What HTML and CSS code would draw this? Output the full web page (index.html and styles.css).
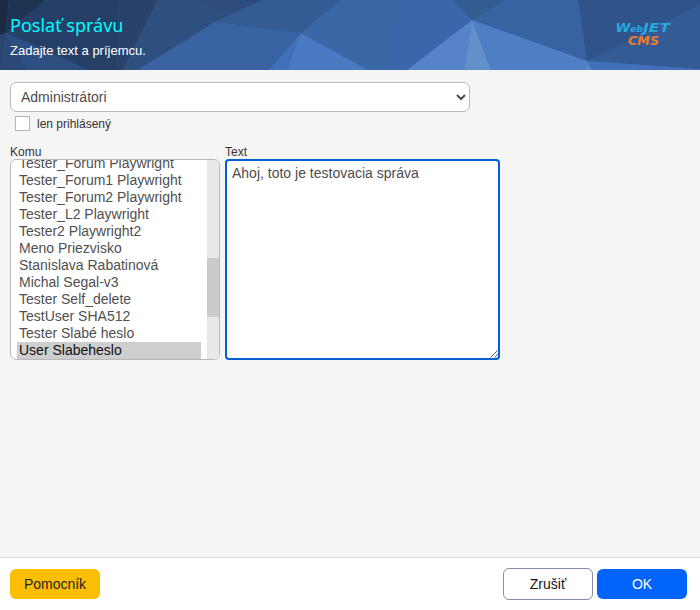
FILE: index.html
```html
<!DOCTYPE html>
<html lang="sk">
<head>
<meta charset="utf-8">
<title>Poslať správu</title>
<link rel="stylesheet" href="styles.css">
</head>
<body>
<header class="header">
  <svg class="header-bg" viewBox="0 0 700 70" preserveAspectRatio="none" aria-hidden="true">
    <rect width="700" height="70" fill="#3862a1"/>
    <path fill="#1a2a43" d="M0 0H9L6 33L0 35Z"/>
    <path fill="#1f3352" d="M9 0H46L6 33Z"/>
    <path fill="#263f66" d="M46 0H119L117 70H88L6 33Z"/>
    <path fill="#28426b" d="M119 0H158L123 70H117Z"/>
    <path fill="#294673" d="M0 35L6 33L1 70H0Z"/>
    <path fill="#2a4978" d="M6 33L27 70H1Z"/>
    <path fill="#2d4e80" d="M6 33L88 70H27Z"/>
    <path fill="#2e5081" d="M158 0H262L215 22L138 70H123Z"/>
    <path fill="#2e4d7d" d="M195 0H262L230 15Z"/>
    <path fill="#345b92" d="M262 0H341L301 33L215 22L230 15Z"/>
    <path fill="#3862a1" d="M215 22L301 33L269 70H138Z"/>
    <path fill="#4070bb" d="M301 33L287 70H269Z"/>
    <path fill="#4a7bc2" d="M301 33L368 70H287Z"/>
    <path fill="#3a67a5" d="M341 0H400L393 70H368L301 33Z"/>
    <path fill="#3b66a9" d="M399 0H453L472 20L407 70H392Z"/>
    <path fill="#335c91" d="M452 0H505L472 20Z"/>
    <path fill="#5784c8" d="M472 20L464 70H407Z"/>
    <path fill="#6490ca" d="M472 20L491 70H464Z"/>
    <path fill="#4e7fc4" d="M472 20L587 61L584 70H491Z"/>
    <path fill="#30548a" d="M578 0H700V5L587 61Z"/>
    <path fill="#345b93" d="M700 5V69L587 61Z"/>
    <path fill="#4070bb" d="M587 61L700 69V70H592Z"/>
    <path fill="#5784c8" d="M587 61L592 70H584Z"/>
  </svg>
  <div class="heading">
    <h1>Poslať správu</h1>
    <p>Zadajte text a príjemcu.</p>
  </div>
  <svg class="logo" width="60" height="26" viewBox="0 0 60 26">
    <g font-family="DejaVu Sans, sans-serif" font-weight="bold" font-style="italic">
      <text x="2.5" y="10.8" font-size="12" fill="#28a9e0" textLength="15" lengthAdjust="spacingAndGlyphs">W</text>
      <text x="17" y="10.8" font-size="9" fill="#28a9e0" textLength="13" lengthAdjust="spacingAndGlyphs">eb</text>
      <text x="30" y="10.8" font-size="12" fill="#28a9e0" textLength="27" lengthAdjust="spacingAndGlyphs">JET</text>
      <text x="15" y="23.5" font-size="13" fill="#ee7d2b" textLength="31" lengthAdjust="spacingAndGlyphs">CMS</text>
    </g>
  </svg>
</header>
<main class="content">
  <div class="select">
    <span>Administrátori</span>
    <svg width="10" height="7" viewBox="0 0 10 7"><path d="M1 1L5 5L9 1" fill="none" stroke="#4c4c4c" stroke-width="2"/></svg>
  </div>
  <div class="check-row"><span class="checkbox"></span><span>len prihlásený</span></div>
  <div class="fields">
    <div class="field">
      <div class="label">Komu</div>
      <div class="listbox">
        <div class="options">
          <div>Tester_Forum Playwright</div>
          <div>Tester_Forum1 Playwright</div>
          <div>Tester_Forum2 Playwright</div>
          <div>Tester_L2 Playwright</div>
          <div>Tester2 Playwright2</div>
          <div>Meno Priezvisko</div>
          <div>Stanislava Rabatinová</div>
          <div>Michal Segal-v3</div>
          <div>Tester Self_delete</div>
          <div>TestUser SHA512</div>
          <div>Tester Slabé heslo</div>
          <div class="selected">User Slabeheslo</div>
        </div>
        <div class="scrollbar"><div class="thumb"></div></div>
      </div>
    </div>
    <div class="field">
      <div class="label">Text</div>
      <div class="textarea">Ahoj, toto je testovacia správa
        <svg class="grip" width="8" height="8" viewBox="0 0 8 8"><path d="M0.5 7.5L7.5 0.5M4.5 7.5L7.5 4.5" stroke="#555" fill="none"/></svg>
      </div>
    </div>
  </div>
</main>
<footer class="footer">
  <button class="btn help">Pomocník</button>
  <button class="btn cancel">Zrušiť</button>
  <button class="btn ok">OK</button>
</footer>
</body>
</html>
```
FILE: styles.css
```css
* { box-sizing: border-box; }
body {
  margin: 0;
  height: 610px;
  display: flex;
  flex-direction: column;
  overflow: hidden;
  background: #f5f5f5;
  color: #333;
  font: 12px/16px "Liberation Sans", Arial, sans-serif;
}
.header {
  position: relative;
  flex: none;
  height: 70px;
  display: flex;
  justify-content: space-between;
  padding: 0 27px 0 10px;
}
.header-bg { position: absolute; inset: 0; width: 100%; height: 100%; }
.heading { position: relative; padding-top: 12px; }
h1 {
  margin: 0;
  font: 400 18px/26px "Noto Sans", "Open Sans", sans-serif;
  color: #00fbff;
}
.heading p { margin: 5px 0 0; font-size: 13px; line-height: 16px; color: #fff; }
.logo { position: relative; margin-top: 21px; }
.content { flex: 1; padding: 12px 10px; }
.select {
  width: 460px;
  height: 30px;
  display: flex;
  align-items: center;
  justify-content: space-between;
  padding: 0 3px 0 10px;
  border: 1px solid #b9b9b9;
  border-radius: 6px;
  background: #fff;
  color: #4c4c4c;
  font-size: 14px;
}
.check-row { display: flex; align-items: center; gap: 7px; height: 15px; margin: 4px 0 0 5px; }
.checkbox { width: 15px; height: 15px; border: 1px solid #b5b5b5; background: #fff; }
.fields { display: flex; gap: 5px; margin-top: 13px; }
.label { height: 15px; line-height: 16px; }
.listbox {
  width: 210px;
  height: 201px;
  display: flex;
  border: 1px solid #b9b9b9;
  border-radius: 6px;
  background: #fff;
  overflow: hidden;
}
.options {
  flex: 1;
  display: flex;
  flex-direction: column;
  justify-content: flex-end;
  padding: 0 6px;
  color: #4f4f4f;
  font-size: 14px;
  line-height: 17px;
}
.options div { flex: none; height: 17px; padding-left: 2px; white-space: nowrap; }
.options .selected { background: #cecece; color: #101010; }
.scrollbar { width: 12px; background: #e8e8e8; padding-top: 98px; }
.thumb { height: 59px; background: #cbcbcb; }
.textarea {
  position: relative;
  width: 275px;
  height: 201px;
  padding: 4px 5px;
  border: 2px solid #0060d0;
  border-radius: 4px;
  background: #fff;
  color: #4c4c4c;
  font-size: 14px;
  line-height: 17px;
}
.grip { position: absolute; right: 0; bottom: 0; }
.footer {
  flex: none;
  height: 53px;
  display: flex;
  align-items: center;
  gap: 4px;
  padding: 0 13px 0 10px;
  border-top: 1px solid #d6d6d6;
  background: #fff;
}
.btn {
  width: 90px;
  height: 30px;
  padding: 0;
  border: 0;
  border-radius: 6px;
  font: 14px/20px "Liberation Sans", Arial, sans-serif;
}
.help { margin-right: auto; background: #fbbe00; color: #212529; }
.cancel { height: 32px; border: 1px solid #868ea8; background: #fff; color: #13151b; }
.ok { background: #0063fb; color: #fff; }
```
